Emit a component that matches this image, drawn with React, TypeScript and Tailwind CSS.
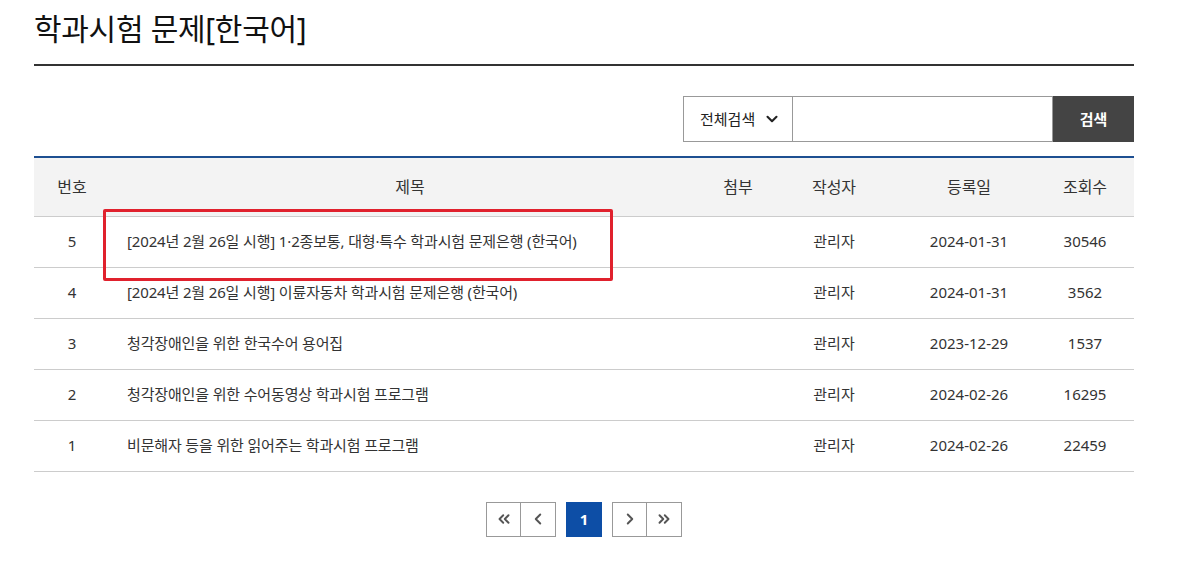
import React from 'react';
import { ChevronDown, ChevronLeft, ChevronRight, ChevronsLeft, ChevronsRight } from 'lucide-react';

interface Post {
  no: number;
  title: string;
  writer: string;
  date: string;
  views: string;
}

const posts: Post[] = [
  { no: 5, title: '[2024년 2월 26일 시행] 1·2종보통, 대형·특수 학과시험 문제은행 (한국어)', writer: '관리자', date: '2024-01-31', views: '30546' },
  { no: 4, title: '[2024년 2월 26일 시행] 이륜자동차 학과시험 문제은행 (한국어)', writer: '관리자', date: '2024-01-31', views: '3562' },
  { no: 3, title: '청각장애인을 위한 한국수어 용어집', writer: '관리자', date: '2023-12-29', views: '1537' },
  { no: 2, title: '청각장애인을 위한 수어동영상 학과시험 프로그램', writer: '관리자', date: '2024-02-26', views: '16295' },
  { no: 1, title: '비문해자 등을 위한 읽어주는 학과시험 프로그램', writer: '관리자', date: '2024-02-26', views: '22459' },
];

const font = "font-['Noto_Sans','Noto_Sans_CJK_KR',sans-serif]";

export default function App() {
  return (
    <div className={`relative w-[1180px] h-[572px] bg-white text-[#333] ${font}`}>
      <div className="ml-[34px] w-[1100px]">
        {/* Title */}
        <div className="h-[66px] pt-[9px] border-b-2 border-[#333]">
          <h2 className="text-[30px] leading-[40px] text-[#111] tracking-[-0.3px]">학과시험 문제[한국어]</h2>
        </div>

        {/* Search */}
        <div className="flex justify-end mt-[30px] h-[46px]">
          <div className="flex items-center gap-[8px] w-[110px] border border-[#999] pl-[16px] text-[15px] text-[#222]">
            전체검색
            <ChevronDown size={18} strokeWidth={2.8} />
          </div>
          <div className="w-[260px] border-y border-r border-[#999]" />
          <button className="w-[81px] bg-[#444] text-white text-[15px] font-bold">검색</button>
        </div>

        {/* Table */}
        <table className="mt-[14px] w-full table-fixed border-t-2 border-[#1d4f91] border-collapse">
          <colgroup>
            <col className="w-[76px]" />
            <col className="w-[600px]" />
            <col className="w-[56px]" />
            <col className="w-[136px]" />
            <col className="w-[134px]" />
            <col className="w-[98px]" />
          </colgroup>
          <thead>
            <tr className="h-[59px] bg-[#f3f3f3] border-b border-[#ccc] text-[16px]">
              <th className="font-normal">번호</th>
              <th className="font-normal">제목</th>
              <th className="font-normal">첨부</th>
              <th className="font-normal">작성자</th>
              <th className="font-normal">등록일</th>
              <th className="font-normal">조회수</th>
            </tr>
          </thead>
          <tbody>
            {posts.map((p) => (
              <tr key={p.no} className="h-[51px] border-b border-[#ccc] text-[15px]">
                <td className="text-center">{p.no}</td>
                <td className="pl-[17px] text-left tracking-[-0.15px]">{p.title}</td>
                <td />
                <td className="text-center">{p.writer}</td>
                <td className="text-center">{p.date}</td>
                <td className="text-center">{p.views}</td>
              </tr>
            ))}
          </tbody>
        </table>

        {/* Pagination */}
        <div className="flex justify-center gap-[10px] mt-[30px]">
          <div className="flex">
            <button className="w-[35px] h-[35px] border border-[#999] flex items-center justify-center text-[#555]">
              <ChevronsLeft size={18} strokeWidth={2.6} />
            </button>
            <button className="w-[35px] h-[35px] border-y border-r border-[#999] flex items-center justify-center text-[#555]">
              <ChevronLeft size={18} strokeWidth={2.6} />
            </button>
          </div>
          <button className="w-[36px] h-[35px] bg-[#0d4ea6] text-white text-[15px] font-bold">1</button>
          <div className="flex">
            <button className="w-[35px] h-[35px] border border-[#999] flex items-center justify-center text-[#555]">
              <ChevronRight size={18} strokeWidth={2.6} />
            </button>
            <button className="w-[35px] h-[35px] border-y border-r border-[#999] flex items-center justify-center text-[#555]">
              <ChevronsRight size={18} strokeWidth={2.6} />
            </button>
          </div>
        </div>
      </div>

      {/* Highlight annotation */}
      <div className="absolute left-[103px] top-[209px] w-[510px] h-[72px] border-[3px] border-[#e0212d] rounded-[2px] pointer-events-none" />
    </div>
  );
}
